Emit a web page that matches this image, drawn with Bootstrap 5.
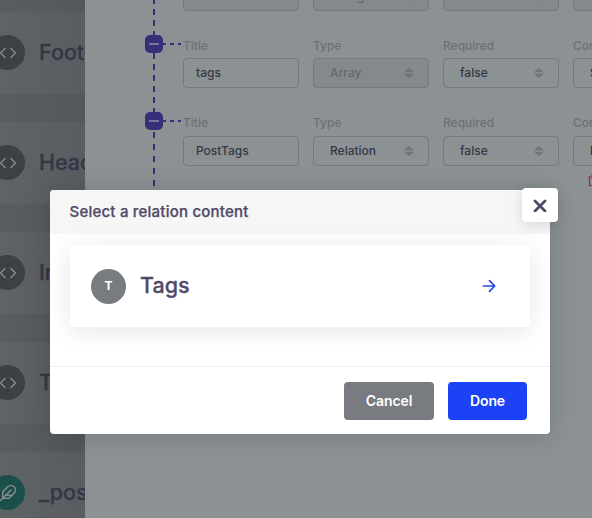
<!DOCTYPE html>
<html lang="en">
<head>
<meta charset="utf-8">
<meta name="viewport" content="width=device-width, initial-scale=1">
<title>Select a relation content</title>
<link href="https://cdn.jsdelivr.net/npm/bootstrap@5.3.0/dist/css/bootstrap.min.css" rel="stylesheet">
<style>
body{font-family:Inter,"Liberation Sans",sans-serif;height:518px;overflow:hidden;background:#8c9194;color:#3a3b4b}
.side{width:85px;background:linear-gradient(90deg,#585d60,#54585b);padding-top:12px;gap:28px}
.side-card{height:82px;background:linear-gradient(90deg,#5e6366,#595d61);padding:0 0 2px 39px;font-size:21.5px;font-weight:500;color:#353646;-webkit-text-stroke:.3px;white-space:nowrap;position:relative}
.side-icon{position:absolute;left:-10px;top:23px;width:35px;height:35px;background:#3b4144;color:#858a8e}
.side-icon.green{background:#1c4f49}
.builder{padding:0 0 0 60px}
.tree{width:38px;height:190px;position:relative}
.tree .trunk{position:absolute;left:8px;width:2px}
.trunk.upper{top:-2px;height:120px;background:repeating-linear-gradient(#382f78 0 6px,transparent 6px 11px)}
.trunk.lower{top:132px;height:58px;background:repeating-linear-gradient(#382f78 0 6px,transparent 6px 12px)}
.node{position:absolute;left:0;width:18px;height:18px;border-radius:5px;background:#382f78}
.node::before{content:"";width:10px;height:2px;background:#77779b}
.node::after{content:"";position:absolute;left:18px;top:8px;width:18px;height:2px;background:linear-gradient(90deg,#382f78 0 3px,transparent 3px 7px,#382f78 7px 11px,transparent 11px 15px,#382f78 15px)}
.node.first{top:35px}.node.second{top:112px}
.fields{display:grid;grid-template-columns:repeat(4,116px);column-gap:14px;grid-template-rows:30px 47px 30px 48px 30px;margin-top:-19px}
.caption{font-size:12px;line-height:16px;color:#6c7074;padding-top:26.5px;font-weight:500}
.field{border:1px solid #74787f;border-radius:4px;padding:0 14px 0 16px;font-size:12px;font-weight:500;color:#353745}
.text-field{padding-left:12px}
.locked{background:#85898c;color:#616a73}
.sorter{width:10px;height:10px;fill:#70737c}
.trash{position:absolute;left:588px;top:174px}
.dialog-box{position:absolute;left:50px;top:190px;width:500px;height:244px;border-radius:4px;background:#fff;box-shadow:0 2px 28px rgba(0,0,0,.16);color:#504a68}
.dialog-head{height:44px;background:#f6f6f6;border-radius:4px 4px 0 0;padding-left:19.5px;font-size:15px;font-weight:500;letter-spacing:.22px;-webkit-text-stroke:.25px}
.dialog-main{height:132px;padding:11px 20px}
.choice{height:82px;border-radius:4px;background:#fff;box-shadow:0 4px 24px rgba(0,0,0,.1);padding:0 33px 0 21px}
.initial{width:35px;height:35px;background:#787b80;font-size:12px;font-weight:700}
.choice-name{font-size:21.5px;font-weight:500;-webkit-text-stroke:.3px;margin-left:14px;padding-bottom:2px}
.dialog-foot{height:68px;border-top:1px solid #f0f0f1;padding:0 23px;gap:14px}
.dialog-foot .btn{height:38px;border:0;border-radius:4px;font-size:14px;font-weight:600;padding:0;letter-spacing:-.1px}
.btn-cancel,.btn-cancel:hover{width:90px;background:#787b80;color:#fff}
.btn-done,.btn-done:hover{width:79px;background:#1c42f5;color:#fff}
.dismiss{position:absolute;left:472px;top:-2px;width:36px;height:34px;border-radius:4px;background:#fff;box-shadow:0 3px 14px rgba(0,0,0,.13);color:#504a68}
svg{display:block;flex:none}
</style>
</head>
<body>
<svg width="0" height="0" class="position-absolute">
<symbol id="code" viewBox="0 0 24 24"><path d="M16 18l6-6-6-6M8 6l-6 6 6 6" fill="none" stroke="currentColor" stroke-width="2" stroke-linecap="round" stroke-linejoin="round"/></symbol>
<symbol id="sort" viewBox="0 0 10 10"><path d="M0 4.200 5 0l5 4.200zM0 5.800 5 10l5-4.200z"/></symbol>
</svg>
<div class="d-flex h-100">
<aside class="side d-flex flex-column flex-shrink-0 overflow-hidden">
<div class="side-card d-flex align-items-center flex-shrink-0"><span class="side-icon rounded-circle d-flex align-items-center justify-content-center"><svg width="18" height="18"><use href="#code"/></svg></span>Footer</div>
<div class="side-card d-flex align-items-center flex-shrink-0"><span class="side-icon rounded-circle d-flex align-items-center justify-content-center"><svg width="18" height="18"><use href="#code"/></svg></span>Header</div>
<div class="side-card d-flex align-items-center flex-shrink-0"><span class="side-icon rounded-circle d-flex align-items-center justify-content-center"><svg width="18" height="18"><use href="#code"/></svg></span>Intro</div>
<div class="side-card d-flex align-items-center flex-shrink-0"><span class="side-icon rounded-circle d-flex align-items-center justify-content-center"><svg width="18" height="18"><use href="#code"/></svg></span>Tags</div>
<div class="side-card d-flex align-items-center flex-shrink-0"><span class="side-icon green rounded-circle d-flex align-items-center justify-content-center"><svg width="18" height="18" viewBox="0 0 24 24" fill="none" stroke="currentColor" stroke-width="2" stroke-linecap="round" stroke-linejoin="round"><path d="M20.2 12.2a6 6 0 0 0-8.5-8.5L5 10.5V19h8.500zM16 8 2 22M17.500 15H9"/></svg></span>_posts</div>
</aside>
<main class="builder d-flex flex-grow-1 overflow-hidden">
<div class="tree flex-shrink-0">
<span class="trunk upper"></span><span class="trunk lower"></span>
<span class="node first d-flex align-items-center justify-content-center"></span>
<span class="node second d-flex align-items-center justify-content-center"></span>
</div>
<div class="fields">
<div class="field text-field locked"></div>
<div class="field locked d-flex align-items-center justify-content-between">String<svg class="sorter"><use href="#sort"/></svg></div>
<div class="field locked d-flex align-items-center justify-content-between">true<svg class="sorter"><use href="#sort"/></svg></div>
<div class="field locked"></div>
<div class="caption">Title</div><div class="caption">Type</div><div class="caption">Required</div><div class="caption">Component</div>
<div class="field text-field d-flex align-items-center">tags</div>
<div class="field locked d-flex align-items-center justify-content-between">Array<svg class="sorter"><use href="#sort"/></svg></div>
<div class="field d-flex align-items-center justify-content-between">false<svg class="sorter"><use href="#sort"/></svg></div>
<div class="field d-flex align-items-center">String</div>
<div class="caption">Title</div><div class="caption">Type</div><div class="caption">Required</div><div class="caption">Component</div>
<div class="field text-field d-flex align-items-center">PostTags</div>
<div class="field d-flex align-items-center justify-content-between">Relation<svg class="sorter"><use href="#sort"/></svg></div>
<div class="field d-flex align-items-center justify-content-between">false<svg class="sorter"><use href="#sort"/></svg></div>
<div class="field d-flex align-items-center">Relation</div>
</div>
</main>
</div>
<svg class="trash" width="12" height="13" viewBox="0 0 12 13" fill="none" stroke="#8d3346" stroke-width="1.200"><path d="M0 3h12M1.500 3v8.500h9V3M4 3V1h4v2"/></svg>
<section class="dialog-box" role="dialog" aria-label="Select a relation content">
<div class="dialog-head d-flex align-items-center">Select a relation content</div>
<button class="dismiss btn border-0 p-0 d-flex align-items-center justify-content-center" aria-label="Close"><svg width="14" height="14" viewBox="0 0 14 14" fill="none" stroke="currentColor" stroke-width="2.800" stroke-linecap="round"><path d="M2 3l10 10M12 3 2 13"/></svg></button>
<div class="dialog-main">
<div class="choice d-flex align-items-center">
<span class="initial rounded-circle text-white d-flex align-items-center justify-content-center">T</span>
<span class="choice-name">Tags</span>
<svg class="ms-auto" width="16" height="16" viewBox="0 0 16 16" fill="none" stroke="#2548ec" stroke-width="1.700" stroke-linecap="round" stroke-linejoin="round"><path d="M2.500 8h11M8.500 2.700 13.700 8l-5.200 5.300"/></svg>
</div>
</div>
<div class="dialog-foot d-flex align-items-center justify-content-end">
<button class="btn btn-cancel">Cancel</button>
<button class="btn btn-done">Done</button>
</div>
</section>
<script src="https://cdn.jsdelivr.net/npm/bootstrap@5.3.0/dist/js/bootstrap.bundle.min.js"></script>
</body>
</html>
